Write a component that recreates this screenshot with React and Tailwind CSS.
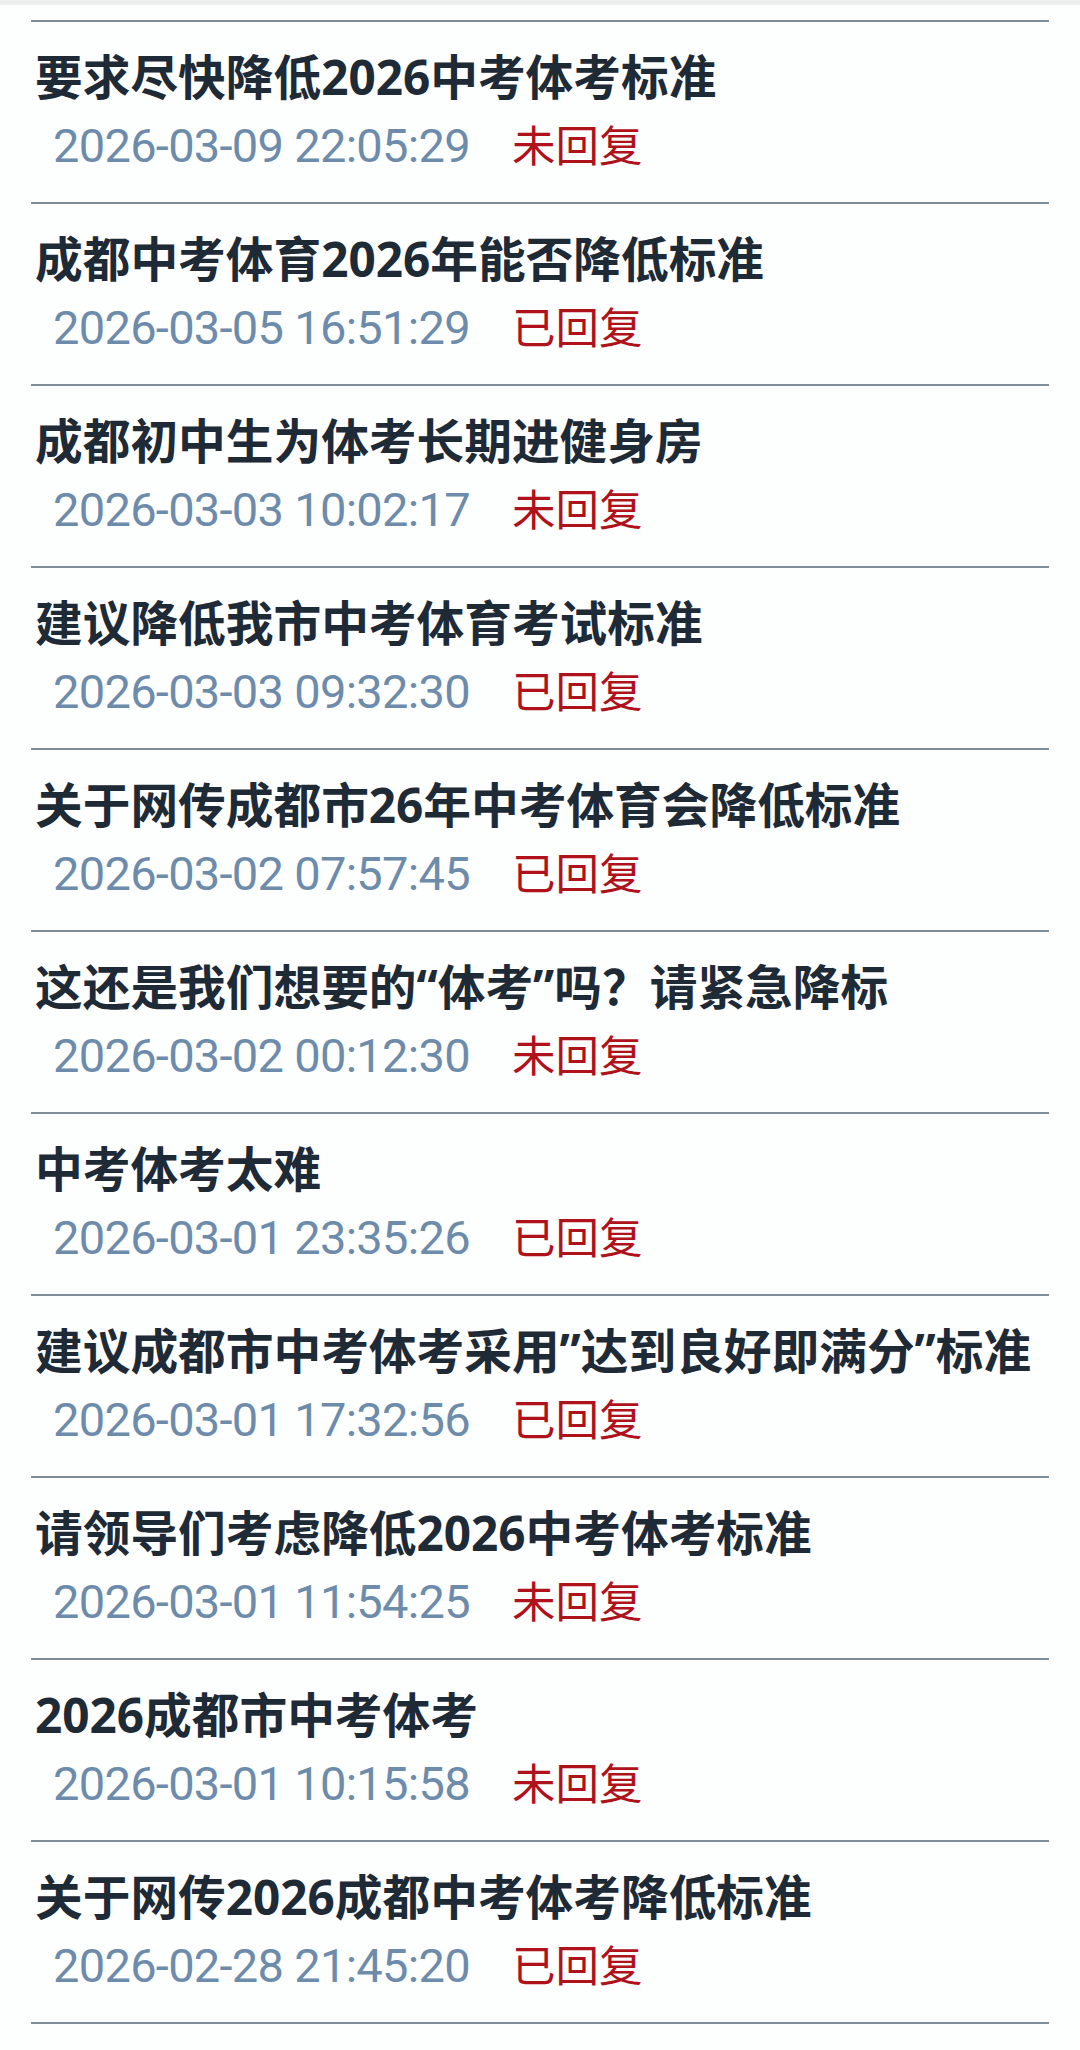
import React from "react";

const rows = [
  ["要求尽快降低2026中考体考标准", "2026-03-09 22:05:29", "未回复"],
  ["成都中考体育2026年能否降低标准", "2026-03-05 16:51:29", "已回复"],
  ["成都初中生为体考长期进健身房", "2026-03-03 10:02:17", "未回复"],
  ["建议降低我市中考体育考试标准", "2026-03-03 09:32:30", "已回复"],
  ["关于网传成都市26年中考体育会降低标准", "2026-03-02 07:57:45", "已回复"],
  ["这还是我们想要的“体考”吗？请紧急降标", "2026-03-02 00:12:30", "未回复"],
  ["中考体考太难", "2026-03-01 23:35:26", "已回复"],
  ["建议成都市中考体考采用”达到良好即满分”标准", "2026-03-01 17:32:56", "已回复"],
  ["请领导们考虑降低2026中考体考标准", "2026-03-01 11:54:25", "未回复"],
  ["2026成都市中考体考", "2026-03-01 10:15:58", "未回复"],
  ["关于网传2026成都中考体考降低标准", "2026-02-28 21:45:20", "已回复"],
];

export default function App() {
  return (
    <div className="w-[1080px] h-[2050px] bg-[#fdfefe] overflow-hidden">
      <div className="h-[5px] bg-[#ededed]" />
      <div className="pt-[15px] px-[31px]">
        {rows.map(([title, date, status], i) => (
          <div key={i} className="border-t-2 border-[#7f8e99] h-[182px]">
            <div
              className="pt-[25px] pl-[4px] text-[47.7px] leading-[60px] font-bold text-[#1e2a36] whitespace-nowrap"
              style={{ fontFamily: '"Noto Sans", "Noto Sans CJK SC", sans-serif' }}
            >
              {title}
            </div>
            <div className="mt-[9px] pl-[22px] flex items-center h-[60px]">
              <span
                className="text-[47px] leading-[60px] text-[#6d8cab] tracking-[-0.7px] whitespace-nowrap"
                style={{ fontFamily: 'Roboto, "Noto Sans", sans-serif' }}
              >
                {date}
              </span>
              <span
                className="ml-[42px] mb-[5px] text-[43.5px] leading-[60px] text-[#b0121c] whitespace-nowrap"
                style={{ fontFamily: '"Noto Sans CJK SC", sans-serif' }}
              >
                {status}
              </span>
            </div>
          </div>
        ))}
        <div className="border-t-2 border-[#7f8e99]" />
      </div>
    </div>
  );
}
